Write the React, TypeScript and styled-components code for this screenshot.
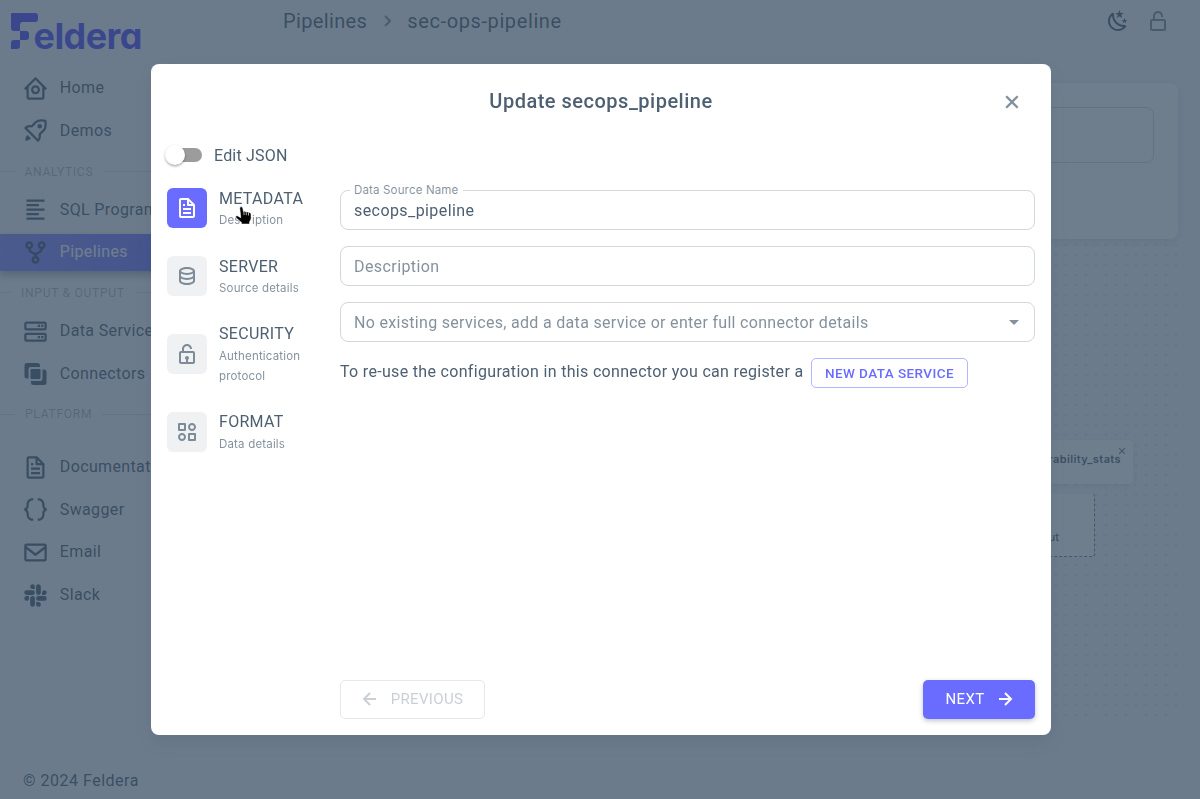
import React from 'react';
import styled, { createGlobalStyle, css } from 'styled-components';
import {
  BiAlignLeft, BiCategoryAlt, BiChevronRight, BiCodeCurly, BiData, BiEnvelope, BiFile,
  BiGitRepoForked, BiHomeCircle, BiLeftArrowAlt, BiLockOpen, BiLockOpenAlt, BiLogoSlack, BiRightArrowAlt,
  BiRocket, BiServer, BiX,
} from 'react-icons/bi';

const ink = (alpha: number) => `rgba(50, 71, 92, ${alpha})`;
const primary = '#696cff';

const GlobalStyle = createGlobalStyle`
  *, *::before, *::after { box-sizing: border-box; }
  body {
    margin: 0;
    overflow: hidden;
    background: #f5f5f9;
    color: ${ink(0.87)};
    font-family: Roboto, "Liberation Sans", sans-serif;
    font-size: 16px;
    line-height: 24px;
  }
  button, input { font: inherit; color: inherit; }
  svg { display: block; flex-shrink: 0; }
`;

const Page = styled.div`
  display: grid;
  grid-template-columns: 260px 1fr;
  height: 799px;
  overflow: hidden;
`;

/* ---------- sidebar ---------- */

const Sidebar = styled.aside`
  display: flex;
  flex-direction: column;
  height: 799px;
`;

const Logo = styled.svg`
  width: 150px;
  height: 50px;
  margin: 11px 0 0 8px;
  overflow: visible;
`;

const LogoText = styled.text`
  font-family: Inter, sans-serif;
  font-size: 36px;
  font-weight: 700;
  font-feature-settings: "cv11";
`;

const Nav = styled.nav`
  display: flex;
  flex-direction: column;
  padding-top: 2.9px;
`;

const NavItem = styled.a<{ $active?: boolean }>`
  display: flex;
  align-items: center;
  gap: 11.3px;
  height: 36.67px;
  margin-top: 6px;
  padding-left: 21.5px;
  letter-spacing: 0.36px;
  white-space: nowrap;
  svg { color: ${ink(0.87)}; }
  ${p => p.$active && css`
    color: #fff;
    background: linear-gradient(98deg, #8789ff, ${primary} 94%);
    box-shadow: 0 4px 8px ${ink(0.42)};
  `}
`;

const NavSection = styled.div<{ $lead: number; $top: number; $bottom: number }>`
  display: grid;
  grid-template-columns: ${p => p.$lead}px auto 1fr;
  align-items: center;
  gap: 10px;
  height: 20px;
  margin: ${p => p.$top}px 0 ${p => p.$bottom}px;
  font-size: 12px;
  line-height: 20px;
  letter-spacing: 0.75px;
  color: ${ink(0.38)};
  &::before, &::after { content: ""; height: 1px; background: ${ink(0.16)}; }
`;

const Copyright = styled.footer`
  margin: auto 0 6px 23px;
  letter-spacing: 0.5px;
`;

/* ---------- background page ---------- */

const Main = styled.main`
  display: flex;
  flex-direction: column;
  padding: 0 22px 0 23px;
`;

const TopBar = styled.header`
  display: flex;
  align-items: center;
  height: 42px;
  margin-bottom: 41px;
`;

const Crumbs = styled.div`
  display: flex;
  align-items: center;
  gap: 8px;
  flex: 1;
  font-size: 20px;
  letter-spacing: 0.36px;
`;

const CurrentCrumb = styled.span`
  letter-spacing: 0.61px;
`;

const TopIcons = styled.div`
  display: flex;
  gap: 16px;
  margin-right: 8px;
`;

const DetailsCard = styled.section`
  height: 156px;
  padding: 24px;
  border-radius: 8px;
  background: #fff;
  box-shadow: 0 2px 10px ${ink(0.14)};
`;

const DetailsField = styled.div`
  height: 56px;
  border: 1px solid ${ink(0.22)};
  border-radius: 8px;
`;

const Canvas = styled.section`
  position: relative;
  flex: none;
  height: 480px;
  background: radial-gradient(circle at 5px 5px, ${ink(0.12)} 0.7px, transparent 1px) 8px 1px / 10px 10px;
`;

const ViewNode = styled.div`
  position: absolute;
  right: 45px;
  top: 201px;
  width: 240px;
  height: 44px;
  padding: 8px 12px;
  border-radius: 4px;
  background: #fff;
  box-shadow: 0 2px 6px ${ink(0.1)};
  text-align: right;
  font-family: Inter, sans-serif;
  font-size: 11px;
  font-weight: 600;
  line-height: 22px;
  letter-spacing: 0.4px;
`;

const NodeClose = styled.span`
  position: absolute;
  right: 4px;
  top: 4px;
  opacity: 0.8;
  svg { width: 14px; height: 14px; }
`;

const OutputNode = styled.div`
  position: absolute;
  right: 83px;
  top: 255px;
  width: 240px;
  height: 62.5px;
  padding: 32px 35px 0;
  border: 1px dashed ${ink(0.7)};
  border-top: 0;
  border-radius: 3px;
  background: #fff;
  text-align: right;
  font-family: Inter, sans-serif;
  font-size: 11px;
  font-weight: 500;
  line-height: 22px;
`;

/* ---------- dialog ---------- */

const Backdrop = styled.div`
  position: fixed;
  inset: 0;
  display: flex;
  justify-content: center;
  align-items: flex-start;
  padding: 64px 0 0 2px;
  background: ${ink(0.7)};
`;

const Dialog = styled.div`
  position: relative;
  display: flex;
  flex-direction: column;
  width: 900px;
  height: 671px;
  padding: 16px;
  border-radius: 8px;
  background: #fff;
  box-shadow: 0 8px 16px ${ink(0.12)};
`;

const DialogHeader = styled.header`
  display: grid;
  grid-template-columns: 40px 1fr 40px;
  align-items: center;
  height: 42px;
`;

const Title = styled.h1`
  grid-column: 2;
  margin: 0;
  text-align: center;
  font-size: 20px;
  font-weight: 500;
  letter-spacing: 0.5px;
`;

const CloseButton = styled.button`
  display: flex;
  margin: 2px 0 0 3px;
  padding: 0;
  border: 0;
  background: none;
  color: ${ink(0.6)};
`;

const SwitchRow = styled.label`
  display: flex;
  align-items: center;
  gap: 12px;
  height: 38px;
  margin: 14px 0 0 1px;
  letter-spacing: 0.2px;
`;

const SwitchText = styled.span`
  padding-top: 1px;
`;

const Track = styled.span`
  display: flex;
  align-items: center;
  width: 34px;
  height: 14px;
  border-radius: 7px;
  background: #9c9c9c;
`;

const Thumb = styled.span`
  width: 20px;
  height: 20px;
  flex: none;
  margin-left: -3px;
  border-radius: 50%;
  background: #fff;
  box-shadow: 0 2px 3px -1px rgba(0,0,0,.25), 0 1px 3px rgba(0,0,0,.2);
`;

const Body = styled.div`
  display: grid;
  grid-template-columns: 173px 695px;
  flex: 1;
`;

const Tabs = styled.div`
  display: flex;
  flex-direction: column;
`;

const Tab = styled.div`
  display: flex;
  align-items: center;
  gap: 12px;
  padding: 12px 0;
`;

const TabIcon = styled.span<{ $active?: boolean }>`
  display: flex;
  align-items: center;
  justify-content: center;
  width: 40px;
  height: 40px;
  flex: none;
  border-radius: 6px;
  background: ${p => (p.$active ? primary : '#eff1f3')};
  color: ${p => (p.$active ? '#fff' : ink(0.6))};
`;

const TabText = styled.div`
  width: 100px;
`;

const TabTitle = styled.div<{ $drop: number }>`
  height: 24px;
  padding-top: ${p => p.$drop}px;
  letter-spacing: 0.3px;
`;

const TabCaption = styled.div`
  font-family: Inter, sans-serif;
  font-size: 11.5px;
  line-height: 20px;
  letter-spacing: 0.18px;
  color: ${ink(0.6)};
`;

const Form = styled.div`
  display: flex;
  flex-direction: column;
  padding: 16px 0 0;
`;

const Field = styled.div<{ $muted?: boolean; $tracking?: number }>`
  position: relative;
  display: flex;
  align-items: center;
  justify-content: space-between;
  height: 40px;
  margin: 0 0 16px;
  padding: 1px 13px 0;
  border: 1px solid ${ink(0.22)};
  border-radius: 8px;
  letter-spacing: ${p => p.$tracking ?? 0.42}px;
  color: ${p => (p.$muted ? ink(0.6) : ink(0.87))};
`;

const FieldLabel = styled.label`
  position: absolute;
  left: 9px;
  top: -11px;
  padding: 0 5px 0 4px;
  background: #fff;
  font-family: Inter, sans-serif;
  font-size: 11.5px;
  line-height: 20px;
  letter-spacing: 0.16px;
  color: ${ink(0.6)};
`;

const Caret = styled.svg`
  width: 10px;
  height: 5px;
  margin-right: 2px;
  fill: ${ink(0.6)};
`;

const Hint = styled.div`
  display: flex;
  align-items: flex-start;
  gap: 8px;
  letter-spacing: 0.32px;
  line-height: 27px;
`;

const ServiceButton = styled.button`
  width: 157px;
  height: 30px;
  padding: 0 1px 0 0;
  border: 1px solid rgba(105, 108, 255, 0.5);
  border-radius: 5px;
  background: none;
  color: ${primary};
  font-size: 13.5px;
  font-weight: 500;
  line-height: 28px;
  letter-spacing: 0.42px;
`;

const Actions = styled.footer`
  display: flex;
  justify-content: space-between;
  margin-top: auto;
`;

const ActionButton = styled.button<{ $filled?: boolean }>`
  display: flex;
  align-items: center;
  justify-content: center;
  gap: 9px;
  width: ${p => (p.$filled ? 112 : 145)}px;
  height: 39px;
  padding: ${p => (p.$filled ? '0 0 1px 5px' : '0 4px 1px 0')};
  border: ${p => (p.$filled ? '0' : `1px solid ${ink(0.12)}`)};
  border-radius: 5px;
  background: ${p => (p.$filled ? primary : 'transparent')};
  box-shadow: ${p => (p.$filled ? `0 2px 5px ${ink(0.3)}` : 'none')};
  color: ${p => (p.$filled ? '#fff' : ink(0.26))};
  font-size: 15px;
  line-height: 26px;
  letter-spacing: 0.35px;
`;

const Pointer = styled.svg`
  position: absolute;
  left: 84px;
  top: 142px;
  width: 17px;
  height: 19px;
`;

const ConnectorsIcon = () => (
  <svg width="27" height="26" viewBox="0 0 26 26" fill="currentColor">
    <rect x="8" y="8" width="10" height="10" rx="1" />
    <path d="M4.5 2H15a2.5 2.5 0 0 1 2.5 2.5V6H8.2A2.2 2.2 0 0 0 6 8.2v9.3H4.5A2.5 2.5 0 0 1 2 15V4.5A2.5 2.5 0 0 1 4.5 2Z" />
    <path d="M20 8.5h1.5A2.5 2.5 0 0 1 24 11v10.5a2.5 2.5 0 0 1-2.5 2.5H11a2.5 2.5 0 0 1-2.5-2.5V20h9.3a2.2 2.2 0 0 0 2.2-2.2Z" />
  </svg>
);

const MoonIcon = () => (
  <svg width="24" height="24" viewBox="0 0 24 24" fill="currentColor">
    <path d="M17.75 4.09L15.22 6.03L16.13 9.09L13.5 7.28L10.87 9.09L11.78 6.03L9.25 4.09L12.44 4L13.5 1L14.56 4L17.75 4.09M21.25 11L19.61 12.25L20.2 14.23L18.5 13.06L16.8 14.23L17.39 12.25L15.75 11L17.81 10.95L18.5 9L19.19 10.95L21.25 11M18.97 15.95C19.8 15.87 20.69 17.05 20.16 17.8C19.84 18.25 19.5 18.67 19.08 19.07C15.17 23 8.84 23 4.94 19.07C1.03 15.17 1.03 8.83 4.94 4.93C5.34 4.53 5.76 4.17 6.21 3.85C6.96 3.32 8.14 4.21 8.06 5.04C7.79 7.9 8.75 10.87 10.95 13.06C13.14 15.26 16.1 16.22 18.97 15.95M17.33 17.97C14.5 17.81 11.7 16.64 9.53 14.5C7.36 12.31 6.2 9.5 6.04 6.68C3.23 9.82 3.34 14.64 6.35 17.66C9.37 20.67 14.19 20.78 17.33 17.97Z" />
  </svg>
);

const steps = [
  { title: 'METADATA', caption: 'Description', Icon: BiFile, drop: 1 },
  { title: 'SERVER', caption: 'Source details', Icon: BiData, drop: 1 },
  { title: 'SECURITY', caption: 'Authentication protocol', Icon: BiLockOpen, drop: 0 },
  { title: 'FORMAT', caption: 'Data details', Icon: BiCategoryAlt, drop: 0 },
];

export default function App() {
  return (
    <>
      <GlobalStyle />
      <Page>
        <Sidebar>
          <Logo viewBox="0 0 150 50" fill="#5048ff">
            <path d="M4 2H27a3 3 0 0 1 3 3v3a3 3 0 0 1-3 3H15a3 3 0 0 0-3 3v6H6a3 3 0 0 1-3-3V3a1 1 0 0 1 1-1Z" />
            <path d="M12 20h6a3 3 0 0 1 3 3v3a3 3 0 0 1-3 3h-6Z" />
            <path d="M6 29h6v6a3 3 0 0 1-3 3H3v-6a3 3 0 0 1 3-3Z" />
            <LogoText x="25.5" y="38" textLength="109">eldera</LogoText>
          </Logo>
          <Nav>
            <NavItem><BiHomeCircle size={27} />Home</NavItem>
            <NavItem><BiRocket size={27} />Demos</NavItem>
            <NavSection $lead={14.5} $top={12.5} $bottom={3.5}>ANALYTICS</NavSection>
            <NavItem><BiAlignLeft size={27} />SQL Programs</NavItem>
            <NavItem $active><BiGitRepoForked size={27} />Pipelines</NavItem>
            <NavSection $lead={11} $top={12} $bottom={4.2}>INPUT &amp; OUTPUT</NavSection>
            <NavItem><BiServer size={27} />Data Services</NavItem>
            <NavItem><ConnectorsIcon />Connectors</NavItem>
            <NavSection $lead={15} $top={12.3} $bottom={18.5}>PLATFORM</NavSection>
            <NavItem><BiFile size={27} />Documentation</NavItem>
            <NavItem><BiCodeCurly size={27} />Swagger</NavItem>
            <NavItem><BiEnvelope size={27} />Email</NavItem>
            <NavItem><BiLogoSlack size={27} />Slack</NavItem>
          </Nav>
          <Copyright>© 2024 Feldera</Copyright>
        </Sidebar>
        <Main>
          <TopBar>
            <Crumbs>
              <span>Pipelines</span>
              <BiChevronRight size={24} color={ink(0.6)} />
              <CurrentCrumb>sec-ops-pipeline</CurrentCrumb>
            </Crumbs>
            <TopIcons>
              <MoonIcon />
              <BiLockOpenAlt size={24} color={ink(0.6)} />
            </TopIcons>
          </TopBar>
          <DetailsCard><DetailsField /></DetailsCard>
          <Canvas>
            <ViewNode>vulnerability_stats<NodeClose><BiX /></NodeClose></ViewNode>
            <OutputNode>Output</OutputNode>
          </Canvas>
        </Main>
      </Page>
      <Backdrop>
        <Dialog>
          <DialogHeader>
            <Title>Update secops_pipeline</Title>
            <CloseButton aria-label="Close"><BiX size={28} /></CloseButton>
          </DialogHeader>
          <SwitchRow><Track><Thumb /></Track><SwitchText>Edit JSON</SwitchText></SwitchRow>
          <Body>
            <Tabs>
              {steps.map(({ title, caption, Icon, drop }, i) => (
                <Tab key={title}>
                  <TabIcon $active={i === 0}><Icon size={24} /></TabIcon>
                  <TabText>
                    <TabTitle $drop={drop}>{title}</TabTitle>
                    <TabCaption>{caption}</TabCaption>
                  </TabText>
                </Tab>
              ))}
            </Tabs>
            <Form>
              <Field><FieldLabel>Data Source Name</FieldLabel>secops_pipeline</Field>
              <Field $muted>Description</Field>
              <Field $muted $tracking={0.31}>
                No existing services, add a data service or enter full connector details
                <Caret viewBox="0 0 10 5"><path d="M0 0h10L5 5Z" /></Caret>
              </Field>
              <Hint>
                <span>To re-use the configuration in this connector you can register a</span>
                <ServiceButton>NEW DATA SERVICE</ServiceButton>
              </Hint>
              <Actions>
                <ActionButton disabled><BiLeftArrowAlt size={24} />PREVIOUS</ActionButton>
                <ActionButton $filled>NEXT<BiRightArrowAlt size={24} /></ActionButton>
              </Actions>
            </Form>
          </Body>
          <Pointer viewBox="0 0 17 19">
            <path d="M4.8 2.2C4.7.4 7.4.2 7.7 2l.8 3.8 1-.5 1.6.7 1-.2 1.400.8.9-.1c1.100.2 1.600 1 1.600 2v4.500l-1.500 3v2H6.500v-1.600L1 11.800C.1 10.600 1.300 9.300 2.700 10l3.100 1.700Z" fill="#000" stroke="#fff" strokeWidth=".5" />
            <path d="M9 6v3M11.3 6.300v2.900M13.500 7v2.500" stroke="#fff" strokeWidth=".7" />
          </Pointer>
        </Dialog>
      </Backdrop>
    </>
  );
}
